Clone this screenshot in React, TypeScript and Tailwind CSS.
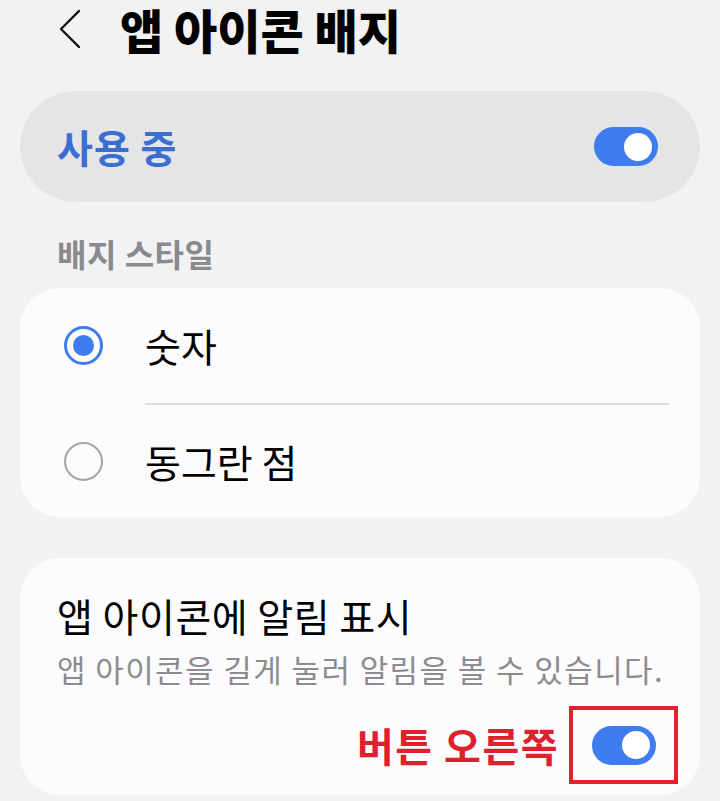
const font = { fontFamily: '"Noto Sans CJK KR", "Noto Sans", sans-serif' }

const Toggle = () => (
  <div className="relative flex h-[39px] w-[64px] items-center rounded-full bg-[#3e7cf0]">
    <div className="absolute right-[3px] h-[34px] w-[34px] rounded-full border-[3px] border-[#3e7cf0] bg-white" />
  </div>
)

const Radio = ({ checked }: { checked?: boolean }) =>
  checked ? (
    <div className="flex h-[39px] w-[39px] items-center justify-center rounded-full border-[3.5px] border-[#3e7cf0]">
      <div className="h-[21px] w-[21px] rounded-full bg-[#3e7cf0]" />
    </div>
  ) : (
    <div className="h-[39px] w-[39px] rounded-full border-[2.5px] border-[#a6a6a6]" />
  )

export default function App() {
  return (
    <div className="h-[801px] w-[720px] overflow-hidden bg-[#f2f2f4] px-5" style={font}>
      <header className="flex h-[58px] items-center">
        <svg width="24" height="40" viewBox="0 0 24 40" className="ml-[37px] shrink-0" fill="none">
          <path d="M22 2 L4 20 L22 38" stroke="#111" strokeWidth="2.4" strokeLinecap="round" strokeLinejoin="round" />
        </svg>
        <h1 className="ml-[39px] whitespace-nowrap text-[47px] font-black leading-[58px] text-black">앱 아이콘 배지</h1>
      </header>

      <div className="mt-[33px] flex h-[111px] items-center justify-between rounded-full bg-[#e5e5e8] pl-[37px] pr-[42px]">
        <span className="text-[39px] font-bold leading-none tracking-[1px] text-[#3a6ed2]">사용 중</span>
        <Toggle />
      </div>

      <div className="mt-[35px] pl-[37px] text-[32px] font-semibold leading-none tracking-[0.5px] text-[#8a8a8c]">
        배지 스타일
      </div>

      <div className="mt-[19px] rounded-[40px] bg-[#fcfcfe]">
        <div className="flex h-[115px] items-center pl-[44px]">
          <Radio checked />
          <span className="ml-[42px] text-[39px] leading-none text-black">숫자</span>
        </div>
        <div className="ml-[125px] mr-[31px] h-[2px] bg-[#dedee0]" />
        <div className="flex h-[112px] items-center pl-[44px]">
          <Radio />
          <span className="ml-[42px] text-[39px] leading-none text-black">동그란 점</span>
        </div>
      </div>

      <div className="mt-[41px] flex h-[237px] flex-col rounded-[40px] bg-[#fcfcfe] pl-[37px] pt-[38px]">
        <div className="text-[39px] leading-none tracking-[0.5px] text-black">앱 아이콘에 알림 표시</div>
        <div className="mt-[18px] whitespace-nowrap text-[31px] leading-none tracking-[1.4px] text-[#8c8c8e]">
          앱 아이콘을 길게 눌러 알림을 볼 수 있습니다.
        </div>
        <div className="mt-[22px] flex items-center justify-end pr-[22px]">
          <span className="mr-[10px] text-[40px] font-bold leading-none tracking-[1.5px] text-[#e0202a]">버튼 오른쪽</span>
          <div className="flex h-[78px] w-[109px] items-center justify-center border-4 border-[#e3212a]">
            <Toggle />
          </div>
        </div>
      </div>
    </div>
  )
}
